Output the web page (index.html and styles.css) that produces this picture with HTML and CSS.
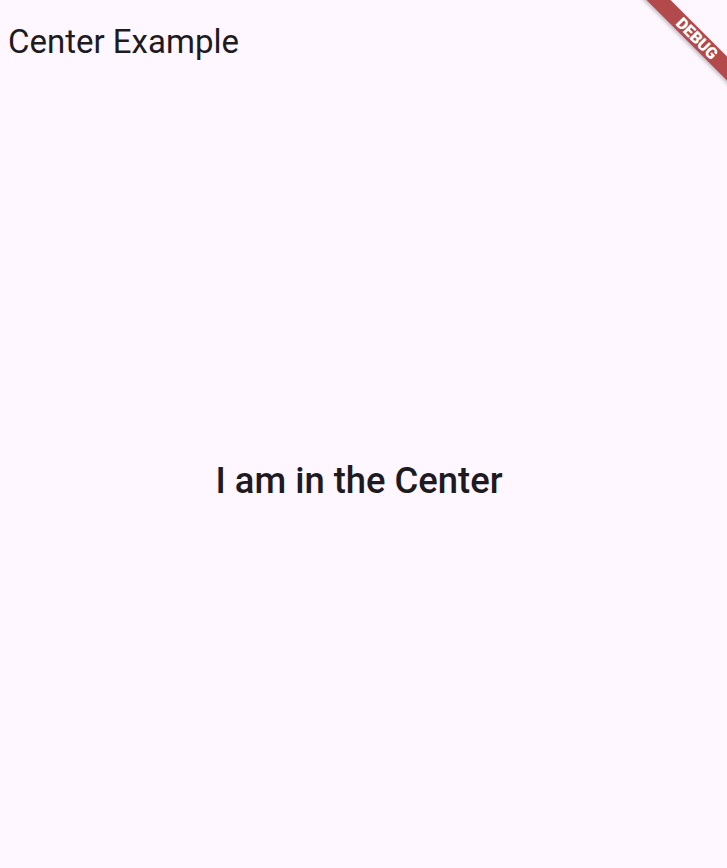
FILE: index.html
```html
<!DOCTYPE html>
<html>
<head>
<meta charset="utf-8">
<link rel="stylesheet" href="styles.css">
</head>
<body>
<div class="app">
  <header class="appbar"><h1 class="title">Center Example</h1></header>
  <main class="body"><p class="center-text">I am in the Center</p></main>
  <div class="banner">DEBUG</div>
</div>
</body>
</html>
```
FILE: styles.css
```css
html, body {
  margin: 0;
  padding: 0;
  height: 100%;
  background: #fef7ff;
  overflow: hidden;
}
.app {
  height: 868px;
  display: flex;
  flex-direction: column;
  font-family: Roboto, "Liberation Sans", sans-serif;
  color: #1d1b20;
  position: relative;
  overflow: hidden;
}
.appbar {
  height: 94px;
  flex: none;
  display: flex;
  align-items: center;
  padding-left: 8px;
  padding-bottom: 12px;
  box-sizing: border-box;
}
.title {
  margin: 0;
  font-size: 33px;
  font-weight: 400;
  line-height: 1;
}
.body {
  flex: 1;
  display: flex;
  align-items: center;
  justify-content: center;
}
.center-text {
  margin: 0 9px 0 0;
  font-size: 36.4px;
  font-weight: 500;
  line-height: 1;
}
.banner {
  position: absolute;
  left: 627px;
  top: 30px;
  width: 140px;
  height: 17px;
  background: #b24a4c;
  color: #fff;
  font-family: Roboto, "Liberation Sans", sans-serif;
  font-weight: 900;
  font-size: 16px;
  line-height: 17px;
  text-align: center;
  transform: rotate(45deg);
  box-shadow: 0 2px 4px rgba(0,0,0,0.25);
}
```
